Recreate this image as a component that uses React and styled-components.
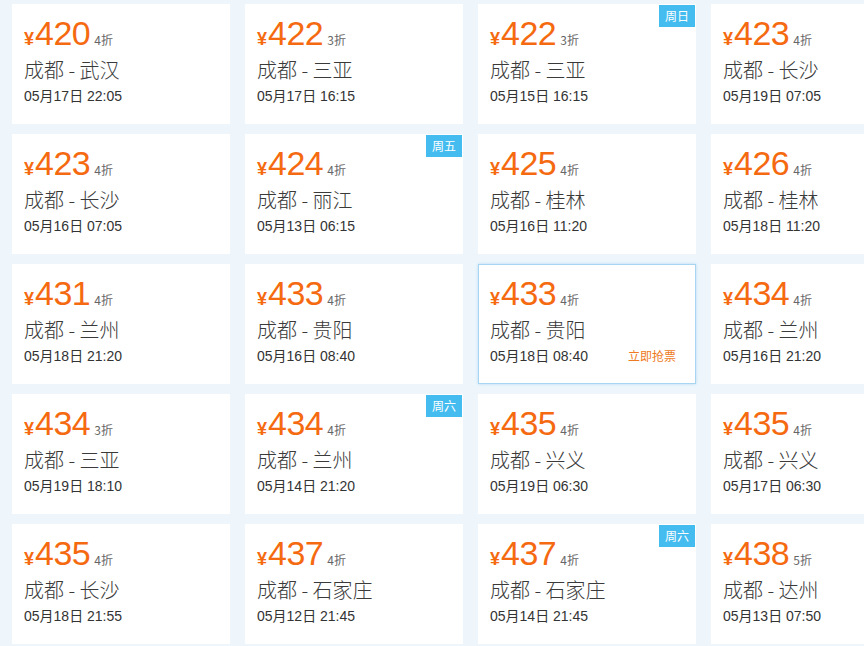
import React from 'react';
import styled, { createGlobalStyle } from 'styled-components';

const GlobalStyle = createGlobalStyle`
  html, body {
    margin: 0;
    padding: 0;
    background: #eef6fc;
    overflow: hidden;
  }
  body {
    font-family: "Liberation Sans", "Noto Sans CJK SC", sans-serif;
  }
`;

const Page = styled.div`
  width: 864px;
  height: 646px;
  overflow: hidden;
  background: #eef6fc;
`;

const Grid = styled.div`
  display: grid;
  grid-template-columns: repeat(4, 218px);
  grid-auto-rows: 120px;
  column-gap: 15px;
  row-gap: 10px;
  padding: 4px 0 0 12px;
  width: max-content;
`;

const Card = styled.div`
  position: relative;
  box-sizing: border-box;
  background: #fff;
  border: 1px solid ${p => (p.$active ? '#a8d5f2' : '#fff')};
  box-shadow: ${p => (p.$active ? '0 0 3px rgba(120,190,235,0.45)' : 'none')};
  padding: 11px 11px 0 11px;
  display: flex;
  flex-direction: column;
`;

const Badge = styled.span`
  position: absolute;
  top: 0;
  right: 0;
  width: 36px;
  height: 22px;
  background: #45bcf0;
  color: #fff;
  font-size: 12px;
  line-height: 22px;
  text-align: center;
  font-family: "Noto Sans CJK SC", sans-serif;
`;

const PriceRow = styled.div`
  display: flex;
  align-items: baseline;
  height: 34px;
  line-height: 34px;
  color: #f56a10;
`;

const Yen = styled.span`
  font-size: 18px;
  font-weight: bold;
  margin-right: 1px;
`;

const Amount = styled.span`
  font-size: 34px;
  letter-spacing: -0.5px;
`;

const Discount = styled.span`
  margin-left: 4px;
  font-size: 12px;
  color: #666;
  font-family: "Noto Sans CJK SC", sans-serif;
`;

const Route = styled.div`
  margin-top: 7px;
  font-size: 20px;
  line-height: 26px;
  color: #3a3a3a;
  font-weight: 300;
  font-family: "Noto Sans CJK SC", sans-serif;
`;

const Bottom = styled.div`
  margin-top: 3px;
  display: flex;
  justify-content: space-between;
  align-items: baseline;
  padding-right: 8px;
`;

const Date = styled.span`
  font-size: 14px;
  line-height: 20px;
  color: #333;
`;

const Grab = styled.span`
  font-size: 12px;
  color: #ee7a22;
  font-family: "Noto Sans CJK SC", sans-serif;
`;

const flights = [
  ['420', '4', '武汉', '05月17日 22:05'],
  ['422', '3', '三亚', '05月17日 16:15'],
  ['422', '3', '三亚', '05月15日 16:15', '周日'],
  ['423', '4', '长沙', '05月19日 07:05'],
  ['423', '4', '长沙', '05月16日 07:05'],
  ['424', '4', '丽江', '05月13日 06:15', '周五'],
  ['425', '4', '桂林', '05月16日 11:20'],
  ['426', '4', '桂林', '05月18日 11:20'],
  ['431', '4', '兰州', '05月18日 21:20'],
  ['433', '4', '贵阳', '05月16日 08:40'],
  ['433', '4', '贵阳', '05月18日 08:40', null, true],
  ['434', '4', '兰州', '05月16日 21:20'],
  ['434', '3', '三亚', '05月19日 18:10'],
  ['434', '4', '兰州', '05月14日 21:20', '周六'],
  ['435', '4', '兴义', '05月19日 06:30'],
  ['435', '4', '兴义', '05月17日 06:30'],
  ['435', '4', '长沙', '05月18日 21:55'],
  ['437', '4', '石家庄', '05月12日 21:45'],
  ['437', '4', '石家庄', '05月14日 21:45', '周六'],
  ['438', '5', '达州', '05月13日 07:50'],
];

export default function App() {
  return (
    <Page>
      <GlobalStyle />
      <Grid>
        {flights.map(([price, disc, to, date, day, active], i) => (
          <Card key={i} $active={active}>
            {day && <Badge>{day}</Badge>}
            <PriceRow>
              <Yen>¥</Yen>
              <Amount>{price}</Amount>
              <Discount>{disc}折</Discount>
            </PriceRow>
            <Route>成都 - {to}</Route>
            <Bottom>
              <Date>{date}</Date>
              {active && <Grab>立即抢票</Grab>}
            </Bottom>
          </Card>
        ))}
      </Grid>
    </Page>
  );
}
